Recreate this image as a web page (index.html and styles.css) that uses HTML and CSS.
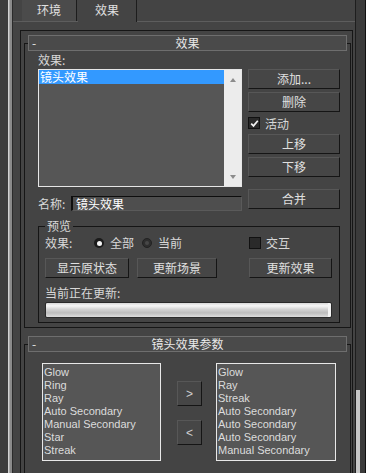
FILE: index.html
```html
<!DOCTYPE html>
<html lang="zh-CN">
<head>
    <meta charset="UTF-8">
    <meta name="viewport" content="width=device-width, initial-scale=1.0">
    <title>效果</title>
    <link rel="stylesheet" href="styles.css">
</head>
<body>
<div class="screen">
    <div class="edge"></div>

    <div class="window">
        <div class="tabs">
            <div class="tab">环境</div>
            <div class="tab active">效果</div>
        </div>

        <div class="panel">
            <!-- 效果 rollout -->
            <div class="rollout">
                <div class="rollout-head"><span class="minus">-</span><span class="rollout-title">效果</span></div>
                <div class="rollout-body">
                    <div class="effects-grid">
                        <div class="grid-label">效果:</div>
                        <div></div>

                        <div class="listbox">
                            <div class="list-items">
                                <div class="list-item selected">镜头效果</div>
                            </div>
                            <div class="list-scroll">
                                <span class="arrow up"></span>
                                <span class="arrow down"></span>
                            </div>
                        </div>
                        <div class="side-buttons">
                            <button class="btn">添加...</button>
                            <button class="btn">删除</button>
                            <div class="check-row">
                                <span class="checkbox">
                                    <svg width="9" height="9" viewBox="0 0 9 9"><path d="M1.2 4.6 L3.5 6.9 L7.8 1.8" fill="none" stroke="#f2f2f2" stroke-width="1.7"/></svg>
                                </span>活动
                            </div>
                            <button class="btn">上移</button>
                            <button class="btn">下移</button>
                        </div>

                        <div class="name-row">
                            <span class="name-label">名称:</span>
                            <div class="name-field">镜头效果</div>
                        </div>
                        <button class="btn merge">合并</button>
                    </div>

                    <fieldset class="group">
                        <legend>预览</legend>
                        <div class="group-row">
                            <div class="radios">
                                <span class="radio-label">效果:</span>
                                <span class="radio on"></span><span class="radio-text">全部</span>
                                <span class="radio off"></span><span class="radio-text">当前</span>
                            </div>
                            <div class="check-row small">
                                <span class="checkbox"></span>交互
                            </div>
                        </div>
                        <div class="group-row buttons">
                            <div class="button-pair">
                                <button class="btn show-orig">显示原状态</button>
                                <button class="btn update-scene">更新场景</button>
                            </div>
                            <button class="btn">更新效果</button>
                        </div>
                        <div class="status-label">当前正在更新:</div>
                        <div class="progress"></div>
                    </fieldset>
                </div>
            </div>

            <!-- 镜头效果参数 rollout -->
            <div class="rollout">
                <div class="rollout-head"><span class="minus">-</span><span class="rollout-title">镜头效果参数</span></div>
                <div class="rollout-body params">
                    <div class="param-list">
                        <div>Glow</div>
                        <div>Ring</div>
                        <div>Ray</div>
                        <div>Auto Secondary</div>
                        <div>Manual Secondary</div>
                        <div>Star</div>
                        <div>Streak</div>
                    </div>
                    <div class="move-buttons">
                        <button class="btn move-btn">&gt;</button>
                        <button class="btn move-btn">&lt;</button>
                    </div>
                    <div class="param-list right">
                        <div>Glow</div>
                        <div>Ray</div>
                        <div>Streak</div>
                        <div>Auto Secondary</div>
                        <div>Auto Secondary</div>
                        <div>Auto Secondary</div>
                        <div>Manual Secondary</div>
                    </div>
                </div>
            </div>
        </div>
    </div>

    <div class="vscroll"><div class="thumb"></div></div>
</div>
</body>
</html>
```

FILE: styles.css
```css
* {
    box-sizing: border-box;
}
body {
    margin: 0;
    background-color: #444;
    font-family: "Noto Sans CJK SC", "Liberation Sans", sans-serif;
    font-size: 12px;
    color: #d8d8d8;
}
.screen {
    display: flex;
    width: 366px;
    height: 473px;
    overflow: hidden;
}
.edge {
    flex: none;
    width: 13px;
    background: linear-gradient(to right, #3d3d3d 0 8px, #d2d2d2 8px 9px, #a9a9a9 9px 10px, #8b8b8b 10px 12px, #2b2b2b 12px 13px);
}
.window {
    flex: none;
    width: 342px;
    display: flex;
    flex-direction: column;
}

/* tabs */
.tabs {
    display: flex;
    height: 22px;
    padding-left: 9px;
    border-bottom: 1px solid #5d5d5d;
}
.tab {
    width: 55px;
    height: 21px;
    line-height: 20px;
    text-align: center;
    border-right: 1px solid #1d1d1d;
    background-color: #4b4b4b;
    color: #e0e0e0;
}
.tab.active {
    width: 59px;
    height: 22px;
    margin-left: 1px;
    background-color: #444;
}

/* command panel */
.panel {
    flex: 1;
    margin: 8px 2px 0 7px;
    padding: 4px 1px 0 3px;
    border: 1px solid #161616;
    border-bottom: none;
}
.rollout + .rollout {
    margin-top: 8px;
}
.rollout-head {
    position: relative;
    display: flex;
    align-items: center;
    height: 16px;
    margin: 0 4px;
    padding: 0 3px;
    line-height: 14px;
    background-color: #4a4a4a;
    border: 1px solid #6e6e6e;
    color: #e8e8e8;
}
.minus {
    width: 12px;
}
.rollout-title {
    flex: 1;
    margin-right: 12px;
    text-align: center;
}
.rollout-body {
    margin-top: -8px;
    padding: 9px 0 4px 13px;
    border: 1px solid #161616;
}

/* effects list */
.effects-grid {
    display: grid;
    grid-template-columns: 204px 92px;
    column-gap: 6px;
    width: 302px;
}
.grid-label {
    height: 16px;
    line-height: 14px;
}
.listbox {
    display: flex;
    height: 118px;
    border: 1px solid #e6e6e6;
    background-color: #565656;
}
.list-items {
    flex: 1;
}
.list-item {
    height: 14px;
    line-height: 14px;
    padding-left: 1px;
    color: #fff;
}
.list-item.selected {
    background-color: #3399ff;
}
.list-scroll {
    width: 17px;
    display: flex;
    flex-direction: column;
    justify-content: space-between;
    align-items: center;
    padding: 8px 0 7px;
    background-color: #ececec;
}
.arrow {
    width: 0;
    height: 0;
    border-left: 3px solid transparent;
    border-right: 3px solid transparent;
}
.arrow.up {
    border-bottom: 4px solid #8c8c8c;
}
.arrow.down {
    border-top: 4px solid #8c8c8c;
}

/* buttons */
.btn {
    display: block;
    height: 20px;
    padding: 0;
    font: inherit;
    line-height: 18px;
    text-align: center;
    color: #e0e0e0;
    background-color: #464646;
    border: 1px solid;
    border-color: #575757 #151515 #151515 #575757;
}
.side-buttons {
    display: flex;
    flex-direction: column;
}
.side-buttons .btn + .btn {
    margin-top: 3px;
}
.check-row {
    display: flex;
    align-items: center;
    height: 22px;
}
.check-row.small {
    height: 14px;
}
.checkbox {
    display: flex;
    align-items: center;
    justify-content: center;
    width: 12px;
    height: 12px;
    margin-right: 5px;
    background-color: #2a2a2a;
    border: 1px solid #111;
}
.name-row {
    display: flex;
    align-items: center;
    margin-top: 8px;
}
.name-label {
    width: 33px;
}
.name-field {
    flex: 1;
    height: 15px;
    line-height: 13px;
    padding-left: 3px;
    color: #fff;
    background-color: #4e4e4e;
    border: 1px solid;
    border-color: #0e0e0e #5a5a5a #5a5a5a #0e0e0e;
    border-left-width: 2px;
}
.merge {
    margin-top: 2px;
}

/* preview group */
.group {
    width: 302px;
    min-width: 0;
    margin: 7px 0 0;
    padding: 3px 7px 4px 6px;
    border: 1px solid #151515;
}
.group legend {
    padding: 0 2px;
    line-height: 14px;
}
.group-row {
    display: grid;
    grid-template-columns: 204px 83px;
    height: 14px;
    line-height: 14px;
}
.group-row.buttons {
    height: 20px;
    margin-top: 8px;
}
.radios {
    display: flex;
    align-items: center;
}
.radio-label {
    width: 49px;
}
.radio {
    display: flex;
    align-items: center;
    justify-content: center;
    width: 10px;
    height: 10px;
    margin-right: 6px;
    border-radius: 50%;
    background-color: #1b1b1b;
}
.radio.on::after {
    content: "";
    width: 5px;
    height: 5px;
    border-radius: 50%;
    background-color: #f5f5f5;
}
.radio.off {
    background-color: #2e2e2e;
    border: 1px solid #222;
}
.radio.off::after {
    content: "";
    width: 4px;
    height: 4px;
    border-radius: 50%;
    background-color: #474747;
}
.radio-text {
    margin-right: 8px;
}
.button-pair {
    display: flex;
    gap: 8px;
}
.show-orig {
    width: 84px;
}
.update-scene {
    width: 80px;
}
.status-label {
    height: 14px;
    margin-top: 8px;
    line-height: 14px;
}
.progress {
    height: 16px;
    margin-top: 2px;
    border: 1px solid #2a2a2a;
    border-radius: 2px;
    background: linear-gradient(#d8d8d8, #f7f7f7 20%, #d3d3d3 45%, #bdbdbd 70%, #dcdcdc);
    box-shadow: inset -3px 0 0 #f4f4f4;
}

/* lens effect params */
.params {
    display: flex;
    align-items: flex-start;
    height: 200px;
    padding: 18px 0 0 17px;
}
.param-list {
    width: 119px;
    height: 98px;
    padding: 2px 0 0 1px;
    font-family: "Liberation Sans", Arial, sans-serif;
    font-size: 11px;
    line-height: 13px;
    color: #dcdcdc;
    background-color: #565656;
    border: 1px solid #e8e8e8;
}
.param-list.right {
    width: 120px;
}
.move-buttons {
    display: flex;
    flex-direction: column;
    margin: 18px 14px 0 16px;
}
.move-btn {
    width: 25px;
    height: 25px;
    line-height: 22px;
    font-family: "Liberation Sans", Arial, sans-serif;
    color: #cfcfcf;
}
.move-btn + .move-btn {
    margin-top: 14px;
}

/* right scrollbar */
.vscroll {
    flex: none;
    display: flex;
    flex-direction: column;
    width: 11px;
    padding-top: 390px;
    background-color: #3b3b3b;
    border-left: 1px solid #1e1e1e;
    border-right: 1px solid #111;
}
.thumb {
    flex: 1;
    width: 4px;
    background-color: #c6c6c6;
}
```
